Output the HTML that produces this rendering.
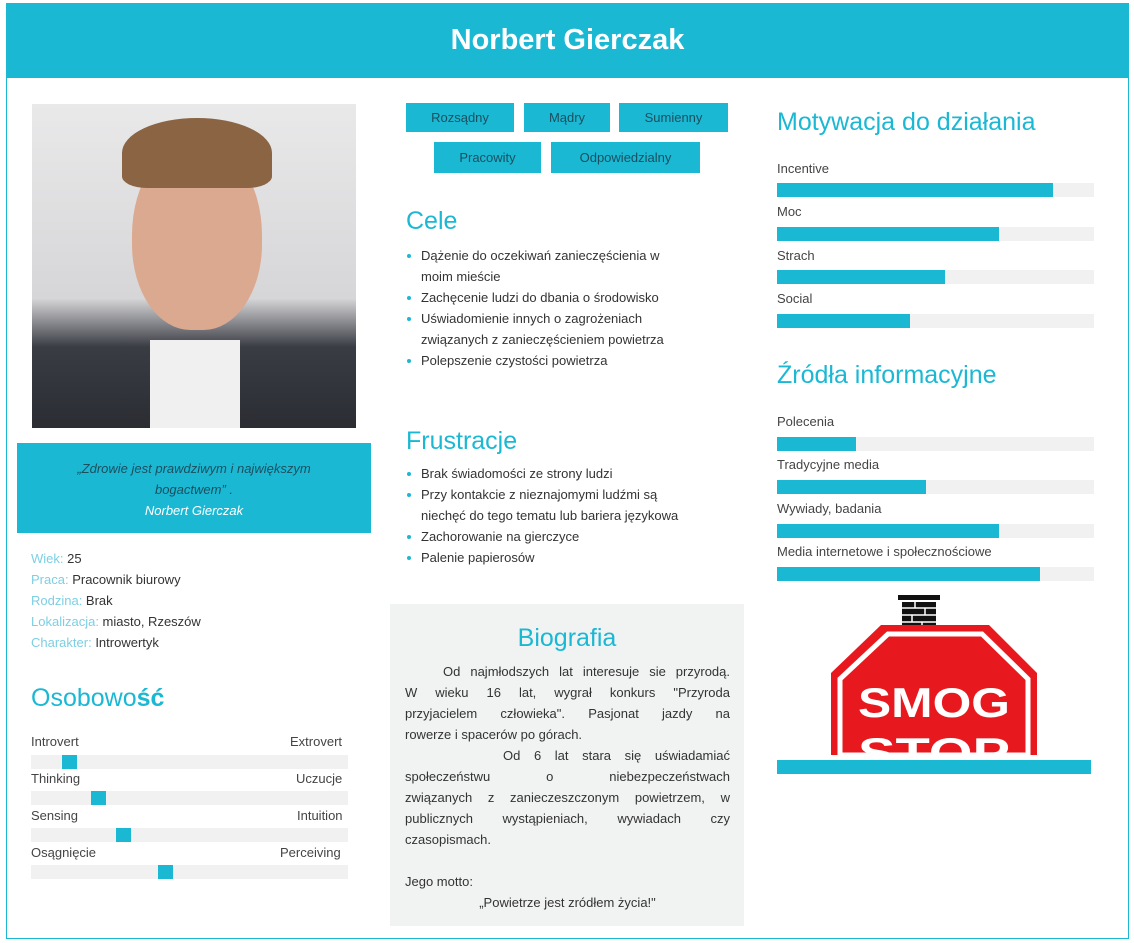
<!DOCTYPE html><html><head><meta charset="utf-8"><style>
*{margin:0;padding:0;box-sizing:border-box}
body{width:1134px;height:943px;background:#fff;font-family:"Liberation Sans",sans-serif;color:#3b3b3b;position:relative;overflow:hidden}
.a{position:absolute}
.c{background:#1bb8d4}
.bar{position:absolute;background:#f1f1f1;height:14px}
.bar i{position:absolute;left:0;top:0;bottom:0;background:#1bb8d4}
.lbl{position:absolute;font-size:13px;color:#444}
.tag{position:absolute;background:#1bb8d4;color:#1b4f5e;font-size:13px;text-align:center;line-height:29px;height:29px}
h2{position:absolute;font-weight:normal;color:#1bb8d4;font-size:25px}
ul{position:absolute;font-size:13px;line-height:21px;list-style:none;color:#333}
ul li{padding-left:15px;position:relative}
ul li:before{content:"";position:absolute;left:1px;top:9px;width:4px;height:4px;border-radius:50%;background:#1bb8d4}
.mk{position:absolute;background:#1bb8d4;width:15px;height:14px}
.j{text-align:justify;text-align-last:justify;height:21px}
</style></head><body>
<div class="a" style="left:6px;top:3px;width:1123px;height:936px;border:1px solid #1bb8d4"></div>
<div class="a c" style="left:6px;top:3px;width:1123px;height:75px;color:#fff;font-size:29px;font-weight:bold;text-align:center;line-height:75px">Norbert Gierczak</div>
<div class="a" style="left:32px;top:104px;width:324px;height:324px;background:linear-gradient(#e9e9ea,#d6d6d8 60%,#3a3c44 75%,#2b2d33)"></div>
<div class="a" style="left:132px;top:140px;width:130px;height:190px;border-radius:50% 50% 45% 45%;background:#dba98f"></div>
<div class="a" style="left:122px;top:118px;width:150px;height:70px;border-radius:60% 60% 20% 20%;background:#8b6444"></div>
<div class="a" style="left:150px;top:340px;width:90px;height:88px;background:#f0f0f0"></div>
<div class="a c" style="left:17px;top:443px;width:354px;height:90px;text-align:center;font-style:italic;font-size:13px;line-height:21px;padding-top:15px;color:#1b4f5e">„Zdrowie jest prawdziwym i największym<br>bogactwem” .<br><span style="color:#fff">Norbert Gierczak</span></div>
<div class="a" style="left:31px;top:548px;font-size:13px;line-height:21px;color:#333">
<div><span style="color:#7dcfe3">Wiek:</span> 25</div><div><span style="color:#7dcfe3">Praca:</span> Pracownik biurowy</div><div><span style="color:#7dcfe3">Rodzina:</span> Brak</div><div><span style="color:#7dcfe3">Lokalizacja:</span> miasto, Rzeszów</div><div><span style="color:#7dcfe3">Charakter:</span> Introwertyk</div></div>
<h2 style="left:31px;top:684px">Osobowo<b>ść</b></h2>
<div class="lbl" style="left:31px;top:734px">Introvert</div><div class="lbl" style="left:290px;top:734px">Extrovert</div>
<div class="bar" style="left:31px;top:755px;width:317px"></div><div class="mk" style="left:62px;top:755px"></div>
<div class="lbl" style="left:31px;top:771px">Thinking</div><div class="lbl" style="left:296px;top:771px">Uczucje</div>
<div class="bar" style="left:31px;top:791px;width:317px"></div><div class="mk" style="left:91px;top:791px"></div>
<div class="lbl" style="left:31px;top:808px">Sensing</div><div class="lbl" style="left:297px;top:808px">Intuition</div>
<div class="bar" style="left:31px;top:828px;width:317px"></div><div class="mk" style="left:116px;top:828px"></div>
<div class="lbl" style="left:31px;top:845px">Osągnięcie</div><div class="lbl" style="left:280px;top:845px">Perceiving</div>
<div class="bar" style="left:31px;top:865px;width:317px"></div><div class="mk" style="left:158px;top:865px"></div>

<div class="tag" style="left:406px;top:103px;width:108px">Rozsądny</div>
<div class="tag" style="left:524px;top:103px;width:86px">Mądry</div>
<div class="tag" style="left:619px;top:103px;width:109px">Sumienny</div>
<div class="tag" style="left:434px;top:142px;width:107px;height:31px;line-height:31px">Pracowity</div>
<div class="tag" style="left:551px;top:142px;width:149px;height:31px;line-height:31px">Odpowiedzialny</div>
<h2 style="left:406px;top:207px">Cele</h2>
<ul style="left:406px;top:245px;width:300px"><li>Dążenie do oczekiwań zanieczęścienia w<br>moim mieście</li><li>Zachęcenie ludzi do dbania o środowisko</li><li>Uświadomienie innych o zagrożeniach związanych z zanieczęścieniem powietrza</li><li>Polepszenie czystości powietrza</li></ul>
<h2 style="left:406px;top:427px">Frustracje</h2>
<ul style="left:406px;top:463px;width:320px"><li>Brak świadomości ze strony ludzi</li><li>Przy kontakcie z nieznajomymi ludźmi są<br>niechęć do tego tematu lub bariera językowa</li><li>Zachorowanie na gierczyce</li><li>Palenie papierosów</li></ul>
<div class="a" style="left:390px;top:604px;width:354px;height:322px;background:#f1f2f2"></div>
<h2 style="left:390px;top:624px;width:354px;text-align:center">Biografia</h2>
<div class="a" style="left:405px;top:661px;width:325px;font-size:13px;line-height:21px;color:#333">
<div class="j" style="padding-left:38px">Od najmłodszych lat interesuje sie przyrodą.</div>
<div class="j">W wieku 16 lat, wygrał konkurs "Przyroda</div>
<div class="j">przyjacielem człowieka". Pasjonat jazdy na</div>
<div>rowerze i spacerów po górach.</div>
<div class="j" style="padding-left:98px">Od 6 lat stara się uświadamiać</div>
<div class="j">społeczeństwu o niebezpeczeństwach</div>
<div class="j">związanych z zanieczeszczonym powietrzem, w</div>
<div class="j">publicznych wystąpieniach, wywiadach czy</div>
<div>czasopismach.</div>
<div style="height:21px"></div>
<div>Jego motto:</div>
<div style="text-align:center">„Powietrze jest zródłem życia!"</div></div>

<h2 style="left:777px;top:108px">Motywacja do działania</h2>
<div class="lbl" style="left:777px;top:161px">Incentive</div><div class="bar" style="left:777px;top:183px;width:317px"><i style="width:276px"></i></div>
<div class="lbl" style="left:777px;top:204px">Moc</div><div class="bar" style="left:777px;top:227px;width:317px"><i style="width:222px"></i></div>
<div class="lbl" style="left:777px;top:248px">Strach</div><div class="bar" style="left:777px;top:270px;width:317px"><i style="width:168px"></i></div>
<div class="lbl" style="left:777px;top:291px">Social</div><div class="bar" style="left:777px;top:314px;width:317px"><i style="width:133px"></i></div>
<h2 style="left:777px;top:361px">Źródła informacyjne</h2>
<div class="lbl" style="left:777px;top:414px">Polecenia</div><div class="bar" style="left:777px;top:437px;width:317px"><i style="width:79px"></i></div>
<div class="lbl" style="left:777px;top:457px">Tradycyjne media</div><div class="bar" style="left:777px;top:480px;width:317px"><i style="width:149px"></i></div>
<div class="lbl" style="left:777px;top:501px">Wywiady, badania</div><div class="bar" style="left:777px;top:524px;width:317px"><i style="width:222px"></i></div>
<div class="lbl" style="left:777px;top:544px">Media internetowe i społecznościowe</div><div class="bar" style="left:777px;top:567px;width:317px"><i style="width:263px"></i></div>
<svg class="a" style="left:830px;top:595px" width="210" height="160" viewBox="0 0 210 160">
<rect x="68" y="0" width="42" height="5" fill="#111"/>
<g fill="#111"><rect x="72" y="7" width="34" height="30"/></g>
<g stroke="#fff" stroke-width="1.5"><line x1="72" y1="13" x2="106" y2="13"/><line x1="72" y1="20" x2="106" y2="20"/><line x1="72" y1="27" x2="106" y2="27"/><line x1="85" y1="7" x2="85" y2="13"/><line x1="95" y1="13" x2="95" y2="20"/><line x1="82" y1="20" x2="82" y2="27"/><line x1="92" y1="27" x2="92" y2="37"/></g>
<polygon points="51,30 159,30 207,78 207,160 1,160 1,78" fill="#e8191e"/>
<polygon points="58,39 152,39 198,84 198,160 10,160 10,84" fill="none" stroke="#fff" stroke-width="5"/>
<text x="104" y="122" text-anchor="middle" font-family="Liberation Sans" font-weight="bold" font-size="42" fill="#fff" textLength="152" lengthAdjust="spacingAndGlyphs">SMOG</text>
<text x="104" y="172" text-anchor="middle" font-family="Liberation Sans" font-weight="bold" font-size="42" fill="#fff" textLength="152" lengthAdjust="spacingAndGlyphs">STOP</text>
</svg>
<div class="a c" style="left:777px;top:760px;width:314px;height:14px"></div>
</body></html>
